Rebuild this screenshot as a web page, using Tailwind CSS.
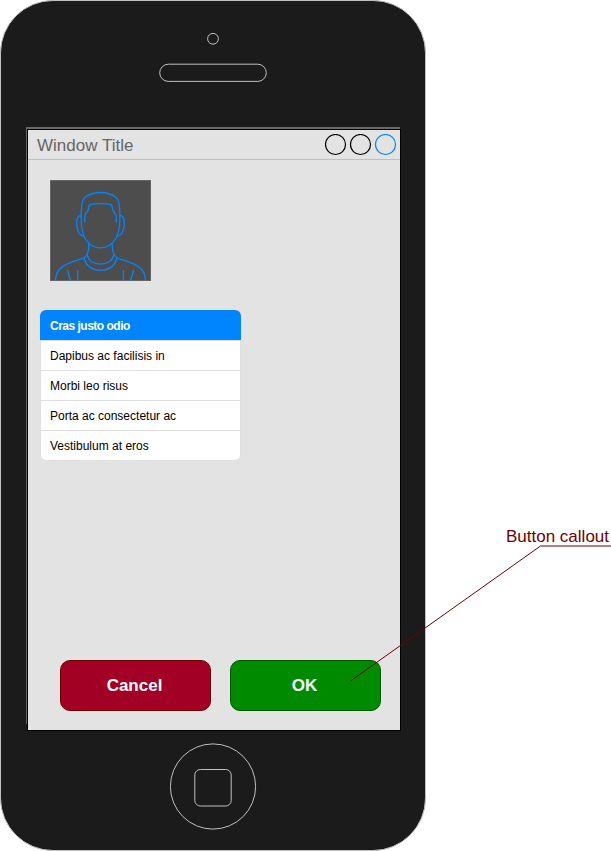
<!DOCTYPE html>
<html lang="en">
<head>
<meta charset="utf-8">
<title>Phone mockup</title>
<script src="https://cdn.jsdelivr.net/npm/@tailwindcss/browser@4"></script>
</head>
<body class="bg-white overflow-hidden font-['Liberation_Sans',Arial,sans-serif]">
<div class="relative w-[611px] h-[851px] overflow-hidden">
  <main class="w-[426px] h-[851px] rounded-[53px] border border-[#c0c0c0] bg-[#1b1b1b] flex flex-col">
    <header class="h-[126px] shrink-0 flex flex-col items-center">
      <svg class="block" width="424" height="126" viewBox="1 1 424 126" fill="none" stroke="#c0c0c0">
        <circle cx="213" cy="38.800" r="5.400"/>
        <rect x="159.700" y="64.200" width="106.600" height="17.200" rx="8.600"/>
      </svg>
    </header>
    <div class="ml-[25px] w-[375px] h-[603px] shrink-0 relative">
      <svg class="absolute left-0 top-0" width="375" height="603" shape-rendering="crispEdges">
        <rect width="374" height="2" fill="#686868"/>
        <rect width="1" height="597" fill="#686868"/>
      </svg>
      <section class="relative ml-px mt-[2px] w-[374px] h-[602px] border border-black bg-[#e3e3e3] flex flex-col">
        <div class="h-[30px] shrink-0 border-b border-[#c0c0c0] flex items-center justify-between pl-[9px] pr-[3px]">
          <h1 class="text-[17px] leading-[29px] text-[#666666] pt-[2px]">Window Title</h1>
          <svg class="block" width="72" height="22" viewBox="0 0 72 22" fill="none" stroke-width="1.2">
            <circle cx="10.500" cy="10.500" r="10" stroke="#000"/>
            <circle cx="35.500" cy="10.500" r="10" stroke="#000"/>
            <circle cx="60.500" cy="10.500" r="10" stroke="#0085ff"/>
          </svg>
        </div>
        <svg class="block shrink-0 ml-[22px] mt-[20px]" width="101" height="101" viewBox="50 180 101 101" fill="none">
          <rect x="50.500" y="180.500" width="100" height="100" fill="#4d4d4d" stroke="#666"/>
          <g stroke="#0085ff" stroke-width="1.3" stroke-linejoin="round">
            <path d="M81.500 226C80.900 218 81.300 208 82 203.500C82.500 200.500 83.300 198.700 85 197.300C89.500 194 94.500 192.500 100.500 192.500C106.500 192.500 111.500 194 116 197.300C117.700 198.700 118.500 200.500 119 203.500C119.700 208 120.100 218 119.500 226"/>
            <path d="M81.300 215.500C78 215.500 76.700 219.500 76.700 223.500C76.700 230.500 79.500 236.300 84.500 236.300M119.700 215.500C123 215.500 124.300 219.500 124.300 223.500C124.300 230.500 121.500 236.300 116.500 236.300"/>
            <path d="M81.500 225C82 231 83 235 85.500 239C89 245 94.500 247.800 100.500 247.800C106.500 247.800 112 245 115.500 239C118 235 119 231 119.500 225"/>
            <path d="M84.700 222.500V216.500C84.700 213 88.500 212.500 88.500 208.500C88.500 205.300 90 204.200 92.500 204.200C94.500 203.600 97 203.600 100.500 203.600C104 203.600 106.500 203.600 108.500 204.200C111 204.200 112.500 205.300 112.500 208.500C112.500 212.500 116.300 213 116.300 216.500V222.500"/>
            <path d="M88.700 243.500C89.200 250.500 88 254.500 84 258C86.300 266 92.500 270.200 100.500 270.200C108.500 270.200 114.700 266 117 258C113 254.500 111.800 250.500 112.300 243.500"/>
            <path d="M87.100 254.500C88.300 260.500 93.500 264.100 100.500 264.100C107.500 264.100 112.700 260.500 113.900 254.500"/>
            <path d="M84 258C78 260.300 73 261.300 68 263.600C60.500 267 56 271 55.500 280.500M117 258C123 260.300 128 261.300 133 263.600C140.500 267 145 271 145.500 280.500"/>
            <path d="M67.300 270L70.500 280.500M133.700 270L130.500 280.500M77.700 270V280.500M123.300 270V280.500"/>
          </g>
        </svg>
        <ul class="ml-[12px] mt-[29px] w-[201px] h-[151px] shrink-0 rounded-[6px] overflow-hidden bg-[#dfdfdf] text-[12px] leading-[31px] text-black flex flex-col gap-px pb-px">
          <li class="h-[30px] pl-[10px] leading-[32px] bg-[#0085ff] text-white font-bold tracking-[-0.5px] shrink-0">Cras justo odio</li>
          <li class="h-[29px] mx-px bg-white pl-[9px]">Dapibus ac facilisis in</li>
          <li class="h-[29px] mx-px bg-white pl-[9px]">Morbi leo risus</li>
          <li class="h-[29px] mx-px bg-white pl-[9px]">Porta ac consectetur ac</li>
          <li class="h-[29px] mx-px bg-white pl-[9px] rounded-b-[5px]">Vestibulum at eros</li>
        </ul>
        <div class="mt-auto mb-[19px] ml-[32px] flex gap-[19px] text-[17px] font-bold text-white">
          <button class="w-[151px] h-[51px] rounded-[10px] border border-[#6f0000] bg-[#a20025] pr-[2px]">Cancel</button>
          <button class="w-[151px] h-[51px] rounded-[10px] border border-[#005700] bg-[#008a00] pr-[2px]">OK</button>
        </div>
      </section>
    </div>
    <footer class="flex-1">
      <svg class="block" width="424" height="118" viewBox="1 732 424 118" fill="none" stroke="#c0c0c0">
        <circle cx="213" cy="788.500" r="42.600"/>
        <rect x="194.800" y="771.500" width="36.400" height="36.500" rx="5.500"/>
      </svg>
    </footer>
  </main>
  <svg class="absolute left-0 top-0 pointer-events-none" width="611" height="851" fill="none" stroke="#6f0000">
    <path d="M350.500 681L540.500 546"/>
    <path d="M540.500 546H611"/>
  </svg>
  <p class="absolute left-[506px] top-[527px] text-[17px] leading-[20px] text-[#6f0000] whitespace-nowrap">Button callout</p>
</div>
</body>
</html>
